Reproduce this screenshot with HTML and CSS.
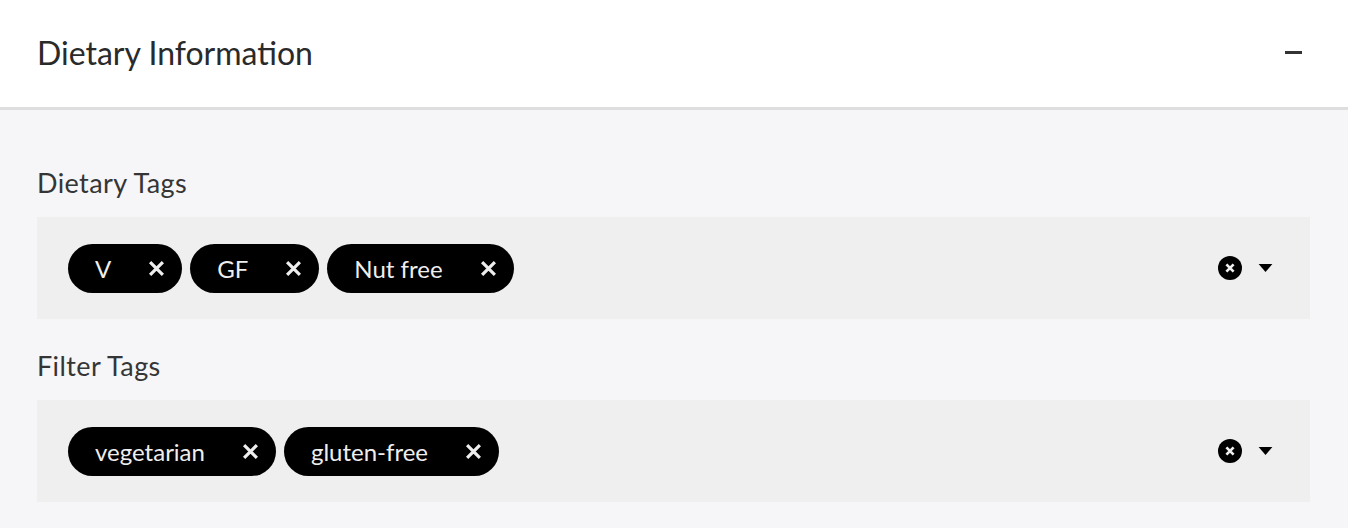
FILE: index.html
```html
<!DOCTYPE html>
<html>
<head>
<meta charset="UTF-8" />
<link rel="stylesheet" href="styles.css">
</head>
<body>
<div class="panel">
  <div class="panel-head">
    <h2 class="panel-title">Dietary Information</h2>
    <span class="collapse"></span>
  </div>
  <div class="panel-body">
    <div class="field">
      <div class="field-label">Dietary Tags</div>
      <div class="select">
        <div class="chips">
          <span class="chip">V<svg class="chip-x" viewBox="0 0 16 16"><path d="M2 2L14 14M14 2L2 14"/></svg></span>
          <span class="chip">GF<svg class="chip-x" viewBox="0 0 16 16"><path d="M2 2L14 14M14 2L2 14"/></svg></span>
          <span class="chip">Nut free<svg class="chip-x" viewBox="0 0 16 16"><path d="M2 2L14 14M14 2L2 14"/></svg></span>
        </div>
        <div class="indicators">
          <svg class="clear" viewBox="0 0 20 20"><circle cx="10" cy="10" r="10"/><path d="M7 7L13 13M13 7L7 13"/></svg>
          <svg class="caret" viewBox="0 0 12 7"><path d="M0 0H12L6 7Z"/></svg>
        </div>
      </div>
    </div>
    <div class="field">
      <div class="field-label">Filter Tags</div>
      <div class="select">
        <div class="chips">
          <span class="chip">vegetarian<svg class="chip-x" viewBox="0 0 16 16"><path d="M2 2L14 14M14 2L2 14"/></svg></span>
          <span class="chip">gluten-free<svg class="chip-x" viewBox="0 0 16 16"><path d="M2 2L14 14M14 2L2 14"/></svg></span>
        </div>
        <div class="indicators">
          <svg class="clear" viewBox="0 0 20 20"><circle cx="10" cy="10" r="10"/><path d="M7 7L13 13M13 7L7 13"/></svg>
          <svg class="caret" viewBox="0 0 12 7"><path d="M0 0H12L6 7Z"/></svg>
        </div>
      </div>
    </div>
  </div>
</div>
</body>
</html>
```

FILE: styles.css
```css
body {
	margin:0;
	background-color:#f6f6f8;
	font-family:"Lato", "Noto Sans", sans-serif;
	color:#2b2b2b;
}

.panel-head
{
	display:flex;
	align-items:center;
	justify-content:space-between;
	height:104px;
	padding:0 46px 3px 37px;
	background-color:#fff;
	border-bottom:3px solid #dedede;
}

.panel-title
{
	margin:0;
	font-size:32px;
	font-weight:400;
	color:#2a2a2a;
}

.collapse
{
	width:17px;
	height:3px;
	background-color:#333;
}

.panel-body
{
	padding:57px 38px 0 37px;
}

.field
{
	margin-bottom:31px;
}

.field-label
{
	font-size:27px;
	letter-spacing:0.4px;
	line-height:32px;
	margin-bottom:18px;
	color:#353535;
}

.select
{
	display:flex;
	align-items:center;
	justify-content:space-between;
	height:102px;
	padding:0 37px 0 31px;
	background-color:#efefef;
}

.chips
{
	display:flex;
	gap:8px;
}

.chip
{
	display:flex;
	align-items:center;
	height:49px;
	padding:0 17px 0 27px;
	border-radius:25px;
	background-color:#000;
	color:#eeeeee;
	font-size:24px;
}

.chip-x
{
	width:17px;
	height:17px;
	margin-left:37px;
	fill:none;
	stroke:#eeeeee;
	stroke-width:3;
}

.indicators
{
	display:flex;
	align-items:center;
	gap:16px;
}

.clear
{
	width:24px;
	height:24px;
}

.clear path
{
	stroke:#efefef;
	stroke-width:2.2;
}

.caret
{
	width:15px;
	height:8px;
}
```
